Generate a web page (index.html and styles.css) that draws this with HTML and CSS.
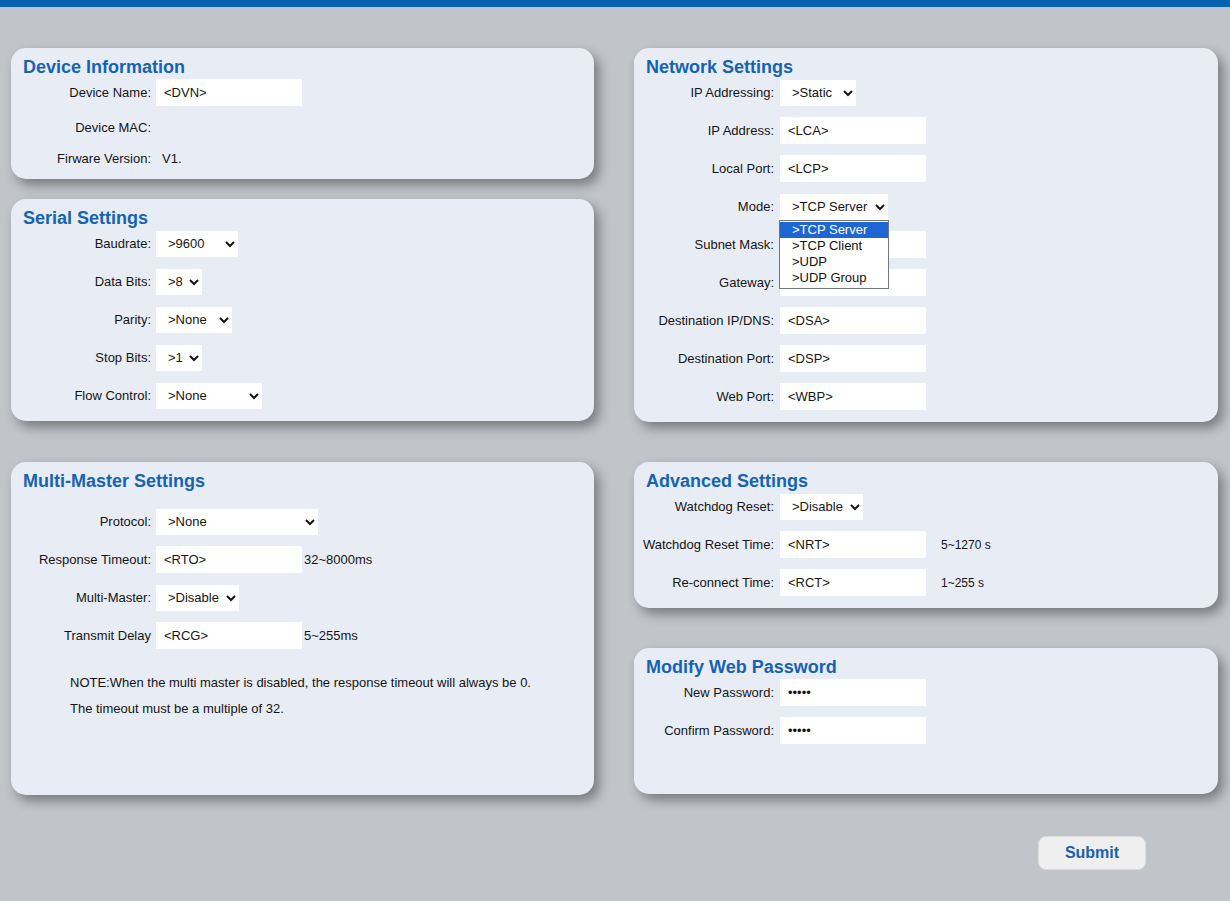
FILE: index.html
```html
<!DOCTYPE html>
<html>
<head>
<meta charset="utf-8">
<link rel="stylesheet" href="styles.css">
</head>
<body>
<div class="topbar"></div>
<form class="page">
  <div class="grid">
    <div class="col">
      <section class="panel info">
        <h2 class="title">Device Information</h2>
        <div class="row"><label class="lbl">Device Name:</label><input class="txt" type="text" value="&lt;DVN&gt;"></div>
        <div class="row text-row"><label class="lbl">Device MAC:</label><span class="val"></span></div>
        <div class="row text-row"><label class="lbl">Firware Version:</label><span class="val">V1.</span></div>
      </section>
      <section class="panel gap20">
        <h2 class="title">Serial Settings</h2>
        <div class="row"><label class="lbl">Baudrate:</label><select class="sel w82"><option>&gt;9600</option></select></div>
        <div class="row"><label class="lbl">Data Bits:</label><select class="sel w46"><option>&gt;8</option></select></div>
        <div class="row"><label class="lbl">Parity:</label><select class="sel w76"><option>&gt;None</option></select></div>
        <div class="row"><label class="lbl">Stop Bits:</label><select class="sel w46"><option>&gt;1</option></select></div>
        <div class="row"><label class="lbl">Flow Control:</label><select class="sel w106"><option>&gt;None</option></select></div>
      </section>
      <section class="panel gap41 mm">
        <h2 class="title">Multi-Master Settings</h2>
        <div class="row first"><label class="lbl">Protocol:</label><select class="sel w162"><option>&gt;None</option></select></div>
        <div class="row"><label class="lbl">Response Timeout:</label><input class="txt" type="text" value="&lt;RTO&gt;"><span class="unit">32~8000ms</span></div>
        <div class="row"><label class="lbl">Multi-Master:</label><select class="sel w83"><option>&gt;Disable</option></select></div>
        <div class="row"><label class="lbl">Transmit Delay</label><input class="txt" type="text" value="&lt;RCG&gt;"><span class="unit">5~255ms</span></div>
        <div class="note">
          <p>NOTE:When the multi master is disabled, the response timeout will always be 0.</p>
          <p>The timeout must be a multiple of 32.</p>
        </div>
      </section>
    </div>
    <div class="col right">
      <section class="panel">
        <h2 class="title">Network Settings</h2>
        <div class="row"><label class="lbl">IP Addressing:</label><select class="sel w76"><option>&gt;Static</option></select></div>
        <div class="row"><label class="lbl">IP Address:</label><input class="txt" type="text" value="&lt;LCA&gt;"></div>
        <div class="row"><label class="lbl">Local Port:</label><input class="txt" type="text" value="&lt;LCP&gt;"></div>
        <div class="row"><label class="lbl">Mode:</label>
          <div class="sel-wrap">
            <select class="sel w108"><option>&gt;TCP Server</option></select>
            <ul class="dropdown">
              <li class="on">&gt;TCP Server</li>
              <li>&gt;TCP Client</li>
              <li>&gt;UDP</li>
              <li>&gt;UDP Group</li>
            </ul>
          </div>
        </div>
        <div class="row"><label class="lbl">Subnet Mask:</label><input class="txt" type="text" value=""></div>
        <div class="row"><label class="lbl">Gateway:</label><input class="txt" type="text" value=""></div>
        <div class="row"><label class="lbl">Destination IP/DNS:</label><input class="txt" type="text" value="&lt;DSA&gt;"></div>
        <div class="row"><label class="lbl">Destination Port:</label><input class="txt" type="text" value="&lt;DSP&gt;"></div>
        <div class="row"><label class="lbl">Web Port:</label><input class="txt" type="text" value="&lt;WBP&gt;"></div>
      </section>
      <section class="panel gap40">
        <h2 class="title">Advanced Settings</h2>
        <div class="row"><label class="lbl">Watchdog Reset:</label><select class="sel w83"><option>&gt;Disable</option></select></div>
        <div class="row"><label class="lbl">Watchdog Reset Time:</label><input class="txt" type="text" value="&lt;NRT&gt;"><span class="unit small">5~1270 s</span></div>
        <div class="row"><label class="lbl">Re-connect Time:</label><input class="txt" type="text" value="&lt;RCT&gt;"><span class="unit small">1~255 s</span></div>
      </section>
      <section class="panel gap40 pw">
        <h2 class="title">Modify Web Password</h2>
        <div class="row"><label class="lbl">New Password:</label><input class="txt" type="password" value="*****"></div>
        <div class="row"><label class="lbl">Confirm Password:</label><input class="txt" type="password" value="*****"></div>
      </section>
    </div>
  </div>
  <div class="actions"><button type="button" class="submit">Submit</button></div>
</form>
</body>
</html>
```

FILE: styles.css
```css
html, body {
  margin: 0;
  padding: 0;
}
body {
  background: #c1c4c9;
  font-family: "Liberation Sans", Arial, sans-serif;
  font-size: 13px;
  color: #151515;
  width: 1230px;
  height: 901px;
  overflow: hidden;
}
.topbar {
  height: 7px;
  background: #0562ae;
}
.page {
  margin: 0;
  padding: 41px 12px 0 11px;
}
.grid {
  display: grid;
  grid-template-columns: 583px 584px;
  column-gap: 40px;
}
.col {
  display: flex;
  flex-direction: column;
}
.panel {
  background: #e8ecf5;
  border-radius: 15px;
  box-shadow: 5px 6px 12px rgba(0, 0, 0, 0.38);
  padding: 9px 12px 1px 12px;
}
.panel.info { padding-bottom: 0; }
.gap20 { margin-top: 20px; }
.gap40 { margin-top: 40px; }
.gap41 { margin-top: 41px; }
.mm { height: 323px; }
.pw { height: 136px; }
.title {
  margin: 0;
  font-size: 18px;
  line-height: 21px;
  padding-bottom: 1px;
  font-weight: bold;
  color: #1663b1;
}
.row {
  display: flex;
  align-items: center;
  height: 27px;
  margin-bottom: 11px;
}
.row.first { margin-top: 15px; }
.text-row { height: 20px; }
.lbl {
  width: 128px;
  flex: none;
  display: flex;
  justify-content: flex-end;
  white-space: nowrap;
  margin-right: 5px;
}
.right .lbl { margin-right: 6px; }
.val {
  padding-left: 6px;
}
.txt {
  box-sizing: border-box;
  width: 146px;
  height: 27px;
  border: none;
  background: #fff;
  padding: 0 8px;
  margin: 0;
  font-family: "Liberation Sans", Arial, sans-serif;
  font-size: 13px;
  color: #151515;
  outline: none;
}
.sel {
  box-sizing: border-box;
  height: 26px;
  border: none;
  background: #fff;
  margin: 0;
  padding: 0 0 0 8px;
  font-family: "Liberation Sans", Arial, sans-serif;
  font-size: 13px;
  color: #151515;
  border-radius: 0;
}
.w46 { width: 46px; }
.w76 { width: 76px; }
.w82 { width: 82px; }
.w83 { width: 83px; }
.w106 { width: 106px; }
.w108 { width: 108px; }
.w162 { width: 162px; }
.unit {
  margin-left: 2px;
}
.unit.small {
  font-size: 12px;
  margin-left: 15px;
}
.sel-wrap {
  position: relative;
  height: 26px;
}
.dropdown {
  position: absolute;
  left: -1px;
  top: 26px;
  width: 110px;
  box-sizing: border-box;
  margin: 0;
  padding: 1px 0 2px;
  list-style: none;
  background: #fff;
  border: 1px solid #767676;
  z-index: 5;
}
.dropdown li {
  height: 16px;
  line-height: 16px;
  padding-left: 12px;
  font-size: 13px;
  color: #111;
}
.dropdown li.on {
  background: #1e67d3;
  color: #fff;
}
.note {
  padding-left: 47px;
  margin-top: 21px;
}
.note p {
  margin: 0;
  line-height: 26px;
}
.actions {
  display: flex;
  justify-content: flex-end;
  padding-right: 72px;
  margin-top: 41px;
}
.submit {
  width: 108px;
  height: 34px;
  background: #efefef;
  border: 1px solid #dcdcdc;
  border-radius: 8px;
  font-family: "Liberation Sans", Arial, sans-serif;
  font-size: 16px;
  font-weight: bold;
  color: #1663b1;
  padding: 0;
}
```
